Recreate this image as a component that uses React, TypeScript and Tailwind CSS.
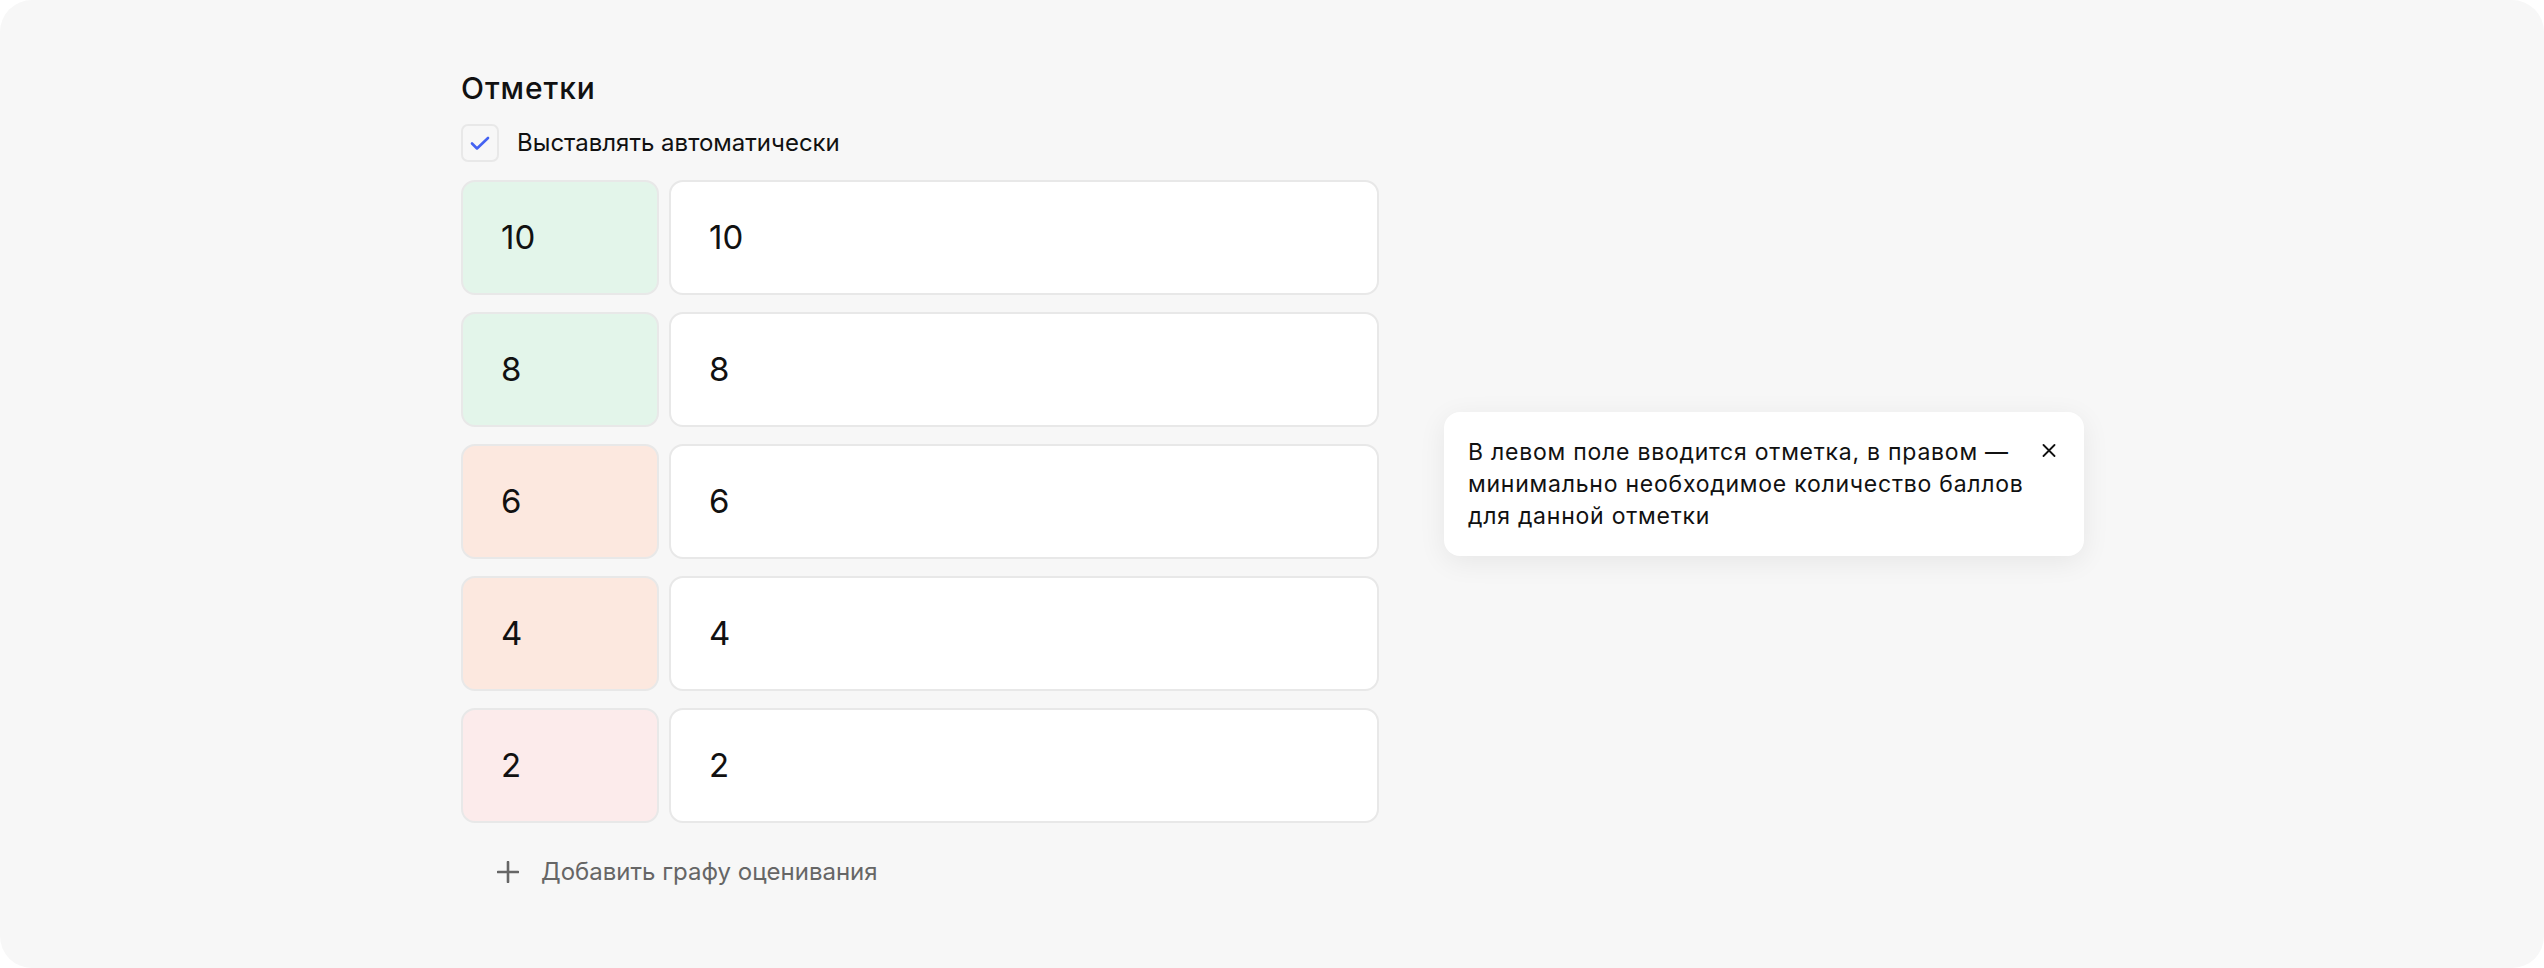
import React from "react";

const grades = [
  { mark: "10", min: "10", bg: "bg-[#e3f5ea]" },
  { mark: "8", min: "8", bg: "bg-[#e3f5ea]" },
  { mark: "6", min: "6", bg: "bg-[#fce8df]" },
  { mark: "4", min: "4", bg: "bg-[#fce8df]" },
  { mark: "2", min: "2", bg: "bg-[#fcebeb]" },
];

function GradeRow({ mark, min, bg }: { mark: string; min: string; bg: string }) {
  return (
    <div className="flex gap-[10px]">
      <div
        className={`w-[198px] h-[115px] rounded-[14px] border-2 border-[#e8e8e8] ${bg} flex items-center pl-[38px] text-[33px] text-[#111]`}
      >
        {mark}
      </div>
      <div className="w-[710px] h-[115px] rounded-[14px] border-2 border-[#e8e8e8] bg-white flex items-center pl-[38px] text-[33px] text-[#111]">
        {min}
      </div>
    </div>
  );
}

export default function App() {
  return (
    <div className="w-full h-[968px] bg-white font-['Inter','Noto_Sans',sans-serif]">
      <div className="w-full h-full bg-[#f7f7f7] rounded-[32px] flex items-start pl-[461px] pt-[70px]">
        <div className="flex flex-col">
          <h1 className="text-[30px] leading-[36px] font-medium tracking-[0.03em] text-[#111]">Отметки</h1>

          <label className="mt-[18px] flex items-center gap-[18px]">
            <span className="w-[38px] h-[38px] rounded-[7px] border-2 border-[#e8e8e8] bg-[#f7f7f7] flex items-center justify-center">
              <svg width="20" height="15" viewBox="0 0 20 15" fill="none">
                <path
                  d="M2 7.5L7 12.5L18 2"
                  stroke="#4462f2"
                  strokeWidth="2.6"
                  strokeLinecap="round"
                  strokeLinejoin="round"
                />
              </svg>
            </span>
            <span className="text-[24px] leading-[32px] text-[#111]">Выставлять автоматически</span>
          </label>

          <div className="mt-[18px] flex flex-col gap-[17px]">
            {grades.map((g) => (
              <GradeRow key={g.mark} {...g} />
            ))}
          </div>

          <button className="mt-[25px] h-[48px] flex items-center gap-[22px] pl-[36px] text-[24px] text-[#666]">
            <svg width="22" height="22" viewBox="0 0 22 22" fill="none">
              <path d="M11 1V21M1 11H21" stroke="#666" strokeWidth="2.6" strokeLinecap="round" />
            </svg>
            Добавить графу оценивания
          </button>
        </div>

        <div className="ml-[65px] mt-[342px] w-[640px] h-[144px] rounded-[16px] bg-white shadow-[0_6px_28px_rgba(0,0,0,0.07)] flex items-start pl-[24px] pt-[24px]">
          <p className="w-[560px] text-[23px] leading-[32px] tracking-[0.033em] text-[#111]">
            В левом поле вводится отметка, в правом — минимально необходимое количество баллов для данной отметки
          </p>
          <button className="ml-[14px] mt-[7px] w-[14px] h-[14px] flex items-center justify-center">
            <svg width="14" height="13" viewBox="0 0 14 13" fill="none">
              <path d="M1.5 1L12.5 12M12.5 1L1.5 12" stroke="#111" strokeWidth="1.8" strokeLinecap="round" />
            </svg>
          </button>
        </div>
      </div>
    </div>
  );
}
